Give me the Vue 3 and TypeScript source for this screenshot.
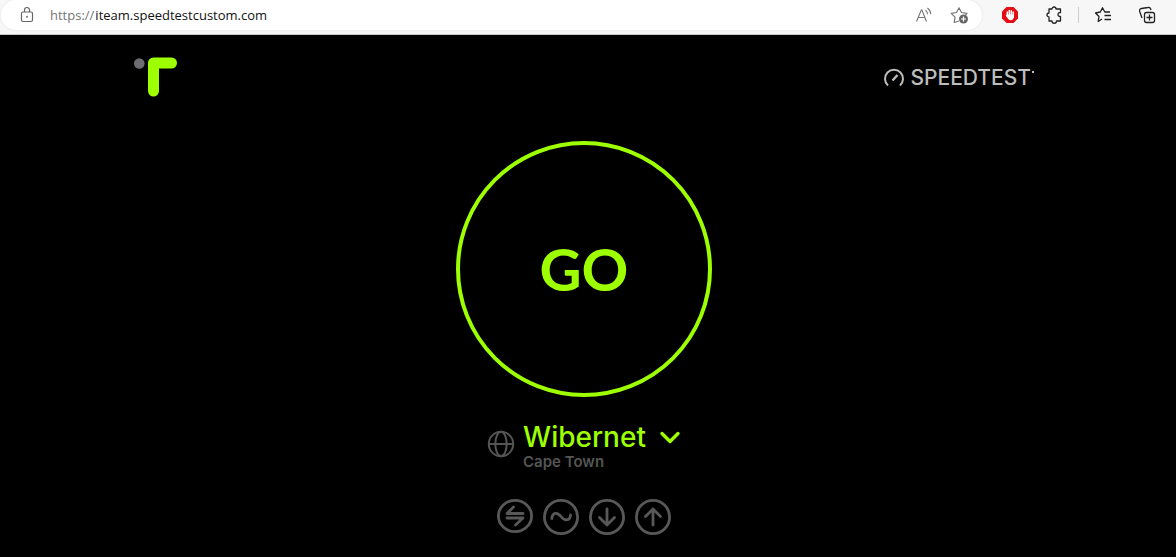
<script setup lang="ts">
import { ref } from 'vue'

const host = ref('iteam.speedtestcustom.com')

interface Stage {
  name: string
  ry: number
  paths: string[]
}

const stages: Stage[] = [
  { name: 'Connections', ry: 16, paths: ['M26 14.500H10L16.500 8', 'M10 19H26L18.500 26'] },
  { name: 'Latency', ry: 17, paths: ['M8.800 19.500C9.500 13 14.500 13 18 17.500S27 22.500 27.500 16'] },
  { name: 'Download', ry: 17, paths: ['M18 10V26M10.500 18.500L18 26L25.500 18.500'] },
  { name: 'Upload', ry: 17, paths: ['M18 26V10M10.500 17.500L18 10L25.500 17.500'] },
]
</script>

<template>
  <div class="window">
    <header class="toolbar">
      <div class="address">
        <button class="tool" aria-label="Site information">
          <svg width="16" height="18" viewBox="0 0 16 18" fill="none" stroke="#666" stroke-width="1.200">
            <rect x="2.500" y="6" width="11" height="9.500" rx="1.500" />
            <path d="M5.500 6V4a2.500 2.500 0 0 1 5 0v2" />
            <circle cx="8" cy="10.700" r=".7" fill="#666" stroke-width=".6" />
          </svg>
        </button>
        <label class="url"><span>https://</span><input v-model="host" type="text" aria-label="Address" spellcheck="false" /></label>
        <button class="tool" aria-label="Read aloud">
          <svg width="18" height="18" viewBox="0 0 18 18" fill="none" stroke="#777" stroke-width="1.100">
            <path d="M1.500 15.500L6.300 4h.6l4.600 11.500M3.300 11.500h6.500" />
            <path d="M10.500 4.200q2 1.500 2 4M12.500 2q3.200 2.500 3.200 6.300" />
          </svg>
        </button>
        <button class="tool star" aria-label="Add to favorites">
          <svg width="20" height="18" viewBox="0 0 20 18" fill="none" stroke="#777" stroke-width="1.200">
            <path d="M9 15L4.200 16.500L5 11.200L1.200 7.300L6.500 6.500L9 1.800L11.500 6.500L17 7.300L15.500 9" stroke-linejoin="round" />
            <circle cx="13.500" cy="13" r="4.500" fill="#666" stroke="none" />
            <path d="M13.500 10.500v5M11 13h5" stroke="#fff" />
          </svg>
        </button>
      </div>
      <div class="extensions">
        <button class="tool" aria-label="Ad blocker">
          <svg width="18" height="18" viewBox="0 0 18 18">
            <path d="M5.500 1h7L17 5.500v7L12.500 17h-7L1 12.500v-7z" fill="#e40d14" />
            <path d="M6.300 10V6M8.300 9V4.500M10.300 9V4.700M12.200 10V6" stroke="#fff" stroke-width="1.500" stroke-linecap="round" />
            <path d="M5.600 8.500H13V11q-.5 3-3.500 3.200Q7.500 14 6.500 12L4.700 9.500q.3-.8 1-.2z" fill="#fff" />
          </svg>
        </button>
        <button class="tool puzzle" aria-label="Extensions">
          <svg width="18" height="18" viewBox="0 0 18 18" fill="none" stroke="#222" stroke-width="1.300" stroke-linejoin="round">
            <path d="M4 3h3a2 2 0 0 1 4 0h4.500v3.500q-2.500-.2-2.500 2t2.500 2V15h-4a2 2 0 0 1-4.500 0H4v-4a2 2 0 0 1 0-4z" />
          </svg>
        </button>
        <span class="divider"></span>
        <button class="tool" aria-label="Favorites">
          <svg width="18" height="18" viewBox="0 0 18 18" fill="none" stroke="#222" stroke-width="1.300" stroke-linejoin="round">
            <path d="M8 13L4.200 15.500L5 10.500L1.500 7L6.300 6L8.500 1.800L10.800 6H16" />
            <path d="M10.500 9.500h6.500M10.500 13.500h6.500" />
          </svg>
        </button>
        <button class="tool collections" aria-label="Collections">
          <svg width="18" height="18" viewBox="0 0 18 18" fill="none" stroke="#222" stroke-width="1.300">
            <rect x="6.500" y="6.500" width="10" height="10" rx="2" />
            <path d="M11.500 8.500v6M8.500 11.500h6M4 12L1.700 5.500Q1 3 3.500 2.500L10 1.500Q12.300 1 13 4" />
          </svg>
        </button>
      </div>
    </header>

    <main class="page">
      <div class="brands">
        <a href="#" aria-label="iteam">
          <svg class="logo" width="44" height="40" viewBox="0 0 44 40">
            <circle cx="5.300" cy="6.500" r="5.300" fill="#6e6c72" />
            <path d="M19.500 34V6H37.500" fill="none" stroke="#9dff00" stroke-width="11" stroke-linecap="round" stroke-linejoin="round" />
          </svg>
        </a>
        <a class="speedtest" href="#">
          <svg width="22" height="22" viewBox="0 0 22 22" fill="none" stroke="#bdbdbd" stroke-width="2">
            <path d="M5 18.500A9 9 0 1 1 17 18.500" />
            <path d="M9.500 13.500L14.500 8" stroke-width="2.400" />
          </svg>
          <span>SPEEDTEST</span><i></i>
        </a>
      </div>

      <button class="go">GO</button>

      <div class="server">
        <svg width="28" height="28" viewBox="0 0 28 28" fill="none" stroke="#555" stroke-width="2">
          <circle cx="14" cy="14" r="12.200" />
          <ellipse cx="14" cy="14" rx="5.700" ry="12.200" />
          <path d="M2 14h24" />
        </svg>
        <div>
          <button class="host">
            Wibernet
            <svg width="22" height="14" viewBox="0 0 22 14" fill="none" stroke="#9dff00" stroke-width="3.400" stroke-linecap="round" stroke-linejoin="round">
              <path d="M3 3.500L11 11.500L19 3.500" />
            </svg>
          </button>
          <p class="city">Cape Town</p>
        </div>
      </div>

      <ul class="stages">
        <li v-for="stage in stages" :key="stage.name">
          <svg width="36" height="36" viewBox="0 0 36 36" fill="none" stroke="#585858" stroke-width="2.800" stroke-linecap="round" stroke-linejoin="round" role="img" :aria-label="stage.name">
            <ellipse cx="18" :cy="stage.ry + 1" rx="16.600" :ry="stage.ry - 0.4" />
            <path v-for="d in stage.paths" :key="d" :d="d" />
          </svg>
        </li>
      </ul>
    </main>
  </div>
</template>

<style>
body {
  margin: 0;
  background: #000;
}
</style>

<style scoped>
.window {
  min-height: 100vh;
  display: flex;
  flex-direction: column;
  background: #000;
}

button {
  padding: 0;
  border: 0;
  background: none;
  color: inherit;
  cursor: pointer;
}

svg {
  display: block;
}

.toolbar {
  display: flex;
  align-items: flex-start;
  background: #f7f7f7;
  border-bottom: 1px solid #c8c8c8;
  height: 34px;
}

.address {
  flex: 1;
  display: flex;
  align-items: center;
  height: 30px;
  margin-left: 1px;
  padding: 0 12px 0 18px;
  border-radius: 15px;
  background: #fff;
  box-shadow: 0 0 3px #e4e4e4;
}

.url {
  flex: 1;
  display: flex;
  margin-left: 15px;
  font: 13px/20px "Open Sans", "Noto Sans", sans-serif;
  color: #767676;
}

.url input {
  flex: 1;
  min-width: 0;
  padding: 0 0 0 1px;
  border: 0;
  outline: 0;
  background: none;
  font: inherit;
  color: #111;
}

.star {
  margin-left: 17px;
}

.extensions {
  display: flex;
  align-items: center;
  height: 30px;
  padding: 0 20px 0 19px;
}

.puzzle {
  margin-left: 26px;
}

.divider {
  width: 1px;
  height: 16px;
  margin: 0 15px;
  background: #ccc;
}

.collections {
  margin-left: 26px;
}

.page {
  flex: 1;
  display: flex;
  flex-direction: column;
  align-items: center;
  padding: 22px 8px 20px 0;
  font-family: Inter, "Open Sans", sans-serif;
}

.brands {
  display: flex;
  justify-content: space-between;
  align-items: center;
  width: 100%;
  max-width: 900px;
}

.speedtest {
  display: flex;
  align-items: center;
  gap: 5px;
  padding-top: 2px;
  color: #bdbdbd;
  font-size: 21px;
  font-weight: 500;
  line-height: 24px;
  text-decoration: none;
}

.speedtest i {
  width: 2px;
  height: 2px;
  margin: 0 0 12px -4px;
  background: #bdbdbd;
}

.go {
  width: 256px;
  height: 256px;
  margin-top: 44px;
  border: 4px solid #9dff00;
  border-radius: 50%;
  color: #9dff00;
  font: 700 58px/64px Lato, sans-serif;
}

.server {
  display: flex;
  align-items: center;
  gap: 8px;
  margin-top: 24px;
}

.server > svg {
  margin-bottom: 4px;
}

.host {
  display: flex;
  align-items: center;
  gap: 13px;
  color: #9dff00;
  font: 500 28px/32px Inter, sans-serif;
}

.city {
  margin: 0;
  color: #555;
  font: 600 15px/18px Inter, sans-serif;
}

.stages {
  display: flex;
  gap: 10px;
  margin: 28px 0 0;
  padding: 0;
  list-style: none;
}
</style>
